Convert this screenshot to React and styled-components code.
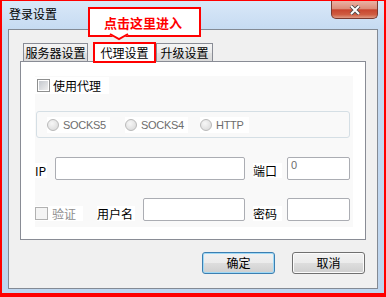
import styled, { createGlobalStyle } from "styled-components";

const GlobalStyle = createGlobalStyle`
  html, body {
    margin: 0;
    padding: 0;
    background: #fff;
  }
  body {
    font-family: "Noto Sans CJK SC", "Liberation Sans", sans-serif;
    font-size: 12px;
    color: #000;
  }
`;

const Shot = styled.div`
  position: relative;
  width: 386px;
  height: 297px;
  box-sizing: border-box;
  border: 2px solid #ff0000;
  border-top-width: 1px;
  border-bottom-width: 4px;
  display: flex;
`;

const Window = styled.div`
  flex: 1;
  display: flex;
  flex-direction: column;
  background: linear-gradient(#d9e8f8, #c6dbf2 28px, #bed5ee);
`;

const TitleBar = styled.div`
  height: 28px;
  display: flex;
  align-items: flex-start;
`;

const Title = styled.div`
  padding: 5px 0 0 7px;
  line-height: 16px;
  font-size: 12px;
`;

const CloseButton = styled.div`
  margin-left: auto;
  margin-right: 6px;
  width: 47px;
  height: 18px;
  box-sizing: border-box;
  border: 1px solid #7a3a30;
  border-top: none;
  border-radius: 0 0 5px 5px;
  background: linear-gradient(#eab2a4, #dc8d7a 45%, #c8452f 52%, #cf5d42 80%, #e09a84);
  display: flex;
  align-items: center;
  justify-content: center;
`;

const Panel = styled.div`
  flex: 1;
  margin: 0 6px 4px;
  background: #f0f0f0;
  border: 1px solid #838a94;
  padding: 13px 11px 0 11px;
  display: flex;
  flex-direction: column;
`;

const TabStrip = styled.div`
  display: flex;
  align-items: flex-end;
  height: 18px;
  padding-left: 3px;
  position: relative;
  z-index: 1;
`;

const Tab = styled.div`
  width: ${(p) => p.$w}px;
  height: ${(p) => (p.$active ? 21 : 18)}px;
  margin-left: ${(p) => p.$ml || 0}px;
  margin-bottom: ${(p) => (p.$active ? -2 : 0)}px;
  box-sizing: border-box;
  border: ${(p) => (p.$active ? "2px solid #ff0000" : "1px solid #898c95")};
  border-bottom: ${(p) => (p.$active ? "2px solid #ff0000" : "none")};
  background: ${(p) =>
    p.$active ? "#fff" : "linear-gradient(#f4f4f4, #ebebeb 50%, #e2e2e2 51%, #dadada)"};
  text-align: center;
  line-height: ${(p) => (p.$active ? 17 : 17)}px;
  font-size: 12px;
  white-space: nowrap;
`;

const Content = styled.div`
  width: 346px;
  height: 179px;
  box-sizing: border-box;
  background: #fff;
  border: 1px solid #898c95;
  padding: 14px 12px 12px 14px;
  display: flex;
`;

const FormArea = styled.div`
  flex: 1;
  background: #f9f9f9;
  display: flex;
  flex-direction: column;
`;

const CheckLabel = styled.div`
  width: 74px;
  height: 17px;
  margin-top: 1px;
  box-sizing: border-box;
  padding-left: 2px;
  background: #fff;
  display: flex;
  align-items: center;
  gap: 3px;
  line-height: 16px;
`;

const Checkbox = styled.span`
  width: 13px;
  height: 13px;
  box-sizing: border-box;
  border: 1px solid ${(p) => (p.$disabled ? "#b1b1b1" : "#8e8f8f")};
  padding: 1px;
  background: ${(p) =>
    p.$disabled
      ? "#f4f4f4"
      : "linear-gradient(135deg, #c4c8ce, #eeeeee) content-box, #fff"};
  flex: none;
`;

const RadioBox = styled.div`
  margin: 17px 0 0 1px;
  width: 314px;
  height: 27px;
  box-sizing: border-box;
  border: 1px solid #d5dfe5;
  border-radius: 3px;
  padding-left: 10px;
  display: flex;
  align-items: center;
`;

const RadioItem = styled.div`
  width: ${(p) => p.$w}px;
  margin-right: ${(p) => p.$mr || 0}px;
  height: 16px;
  background: #fff;
  display: flex;
  align-items: center;
  gap: 4px;
  font-family: "Liberation Sans", sans-serif;
  font-size: 11px;
  letter-spacing: -0.3px;
  color: #6d6d6d;
`;

const Radio = styled.span`
  width: 12px;
  height: 12px;
  box-sizing: border-box;
  border-radius: 50%;
  border: 1px solid #b9b9b9;
  background: radial-gradient(circle at 40% 35%, #f7f7f7, #d6d6d6);
  flex: none;
`;

const Row = styled.div`
  display: flex;
  align-items: flex-start;
  margin-top: ${(p) => p.$mt}px;
  height: 23px;
`;

const Label = styled.div`
  width: ${(p) => p.$w}px;
  margin: ${(p) => p.$mt || 0}px ${(p) => p.$mr || 0}px 0 ${(p) => p.$ml || 0}px;
  height: 15px;
  line-height: 15px;
  background: #fff;
  font-size: 12px;
  white-space: nowrap;
  color: ${(p) => (p.$muted ? "#8d8d8d" : "#000")};
  display: flex;
  align-items: center;
  gap: 4px;
`;

const Input = styled.div`
  width: ${(p) => p.$w}px;
  height: 23px;
  box-sizing: border-box;
  border: 1px solid #abadb3;
  border-radius: 2px;
  background: #fff;
  padding: 1px 3px;
  font-family: "Liberation Sans", sans-serif;
  font-size: 11px;
  line-height: 13px;
  color: #6d6d6d;
`;

const ButtonRow = styled.div`
  display: flex;
  justify-content: flex-end;
  gap: 17px;
  margin-top: 12px;
  padding-right: 1px;
`;

const Button = styled.div`
  width: 73px;
  height: 22px;
  box-sizing: border-box;
  border: 1px solid ${(p) => (p.$default ? "#3c7fb1" : "#707070")};
  border-radius: 3px;
  background: linear-gradient(#f2f2f2, #ebebeb 50%, #dddddd 51%, #cfcfcf);
  box-shadow: inset 0 0 0 1px ${(p) => (p.$default ? "#9fd9f6" : "#fbfbfb")};
  display: flex;
  align-items: center;
  justify-content: center;
  font-size: 12px;
  line-height: 16px;
`;

const Callout = styled.div`
  position: absolute;
  left: 86px;
  top: 6px;
  width: 113px;
  height: 30px;
  box-sizing: border-box;
  border: 2px solid #ff0000;
  background: #fff;
  color: #ff0000;
  font-weight: bold;
  font-size: 13px;
  display: flex;
  align-items: center;
  justify-content: center;
  padding-right: 3px;
  z-index: 5;
`;

const Notch = styled.svg`
  position: absolute;
  top: 100%;
  left: 20px;
  overflow: visible;
`;

const CloseIcon = () => (
  <svg width="12" height="10" viewBox="0 0 12 10">
    <path d="M2 1 L10 9 M10 1 L2 9" stroke="#4a4a4a" strokeWidth="3.8" />
    <path d="M2 1 L10 9 M10 1 L2 9" stroke="#fff" strokeWidth="2" />
  </svg>
);

export default function App() {
  return (
    <>
      <GlobalStyle />
      <Shot>
        <Window>
          <TitleBar>
            <Title>登录设置</Title>
            <CloseButton>
              <CloseIcon />
            </CloseButton>
          </TitleBar>
          <Panel>
            <TabStrip>
              <Tab $w={65}>服务器设置</Tab>
              <Tab $w={63} $ml={5} $active>
                代理设置
              </Tab>
              <Tab $w={57}>升级设置</Tab>
            </TabStrip>
            <Content>
              <FormArea>
                <CheckLabel>
                  <Checkbox />
                  使用代理
                </CheckLabel>
                <RadioBox>
                  <RadioItem $w={63} $mr={15}>
                    <Radio />
                    SOCKS5
                  </RadioItem>
                  <RadioItem $w={63} $mr={12}>
                    <Radio />
                    SOCKS4
                  </RadioItem>
                  <RadioItem $w={49}>
                    <Radio />
                    HTTP
                  </RadioItem>
                </RadioBox>
                <Row $mt={19}>
                  <Label $w={12} $mt={6} $mr={8}>
                    IP
                  </Label>
                  <Input $w={190} />
                  <Label $w={29} $mt={6} $ml={8} $mr={5}>
                    端口
                  </Label>
                  <Input $w={63}>0</Input>
                </Row>
                <Row $mt={18}>
                  <Label $w={48} $mt={8} $muted>
                    <Checkbox $disabled />
                    验证
                  </Label>
                  <Label $w={38} $mt={8} $ml={14} $mr={8}>
                    用户名
                  </Label>
                  <Input $w={102} />
                  <Label $w={29} $mt={8} $ml={8} $mr={5}>
                    密码
                  </Label>
                  <Input $w={63} />
                </Row>
              </FormArea>
            </Content>
            <ButtonRow>
              <Button $default>确定</Button>
              <Button>取消</Button>
            </ButtonRow>
          </Panel>
        </Window>
        <Callout>
          点击这里进入
          <Notch width="18" height="6">
            <polygon points="0,-2 18,-2 18,0 9,5 0,0" fill="#fff" />
            <polyline points="0,-1 9,4 18,-1" fill="none" stroke="#ff0000" strokeWidth="2" />
          </Notch>
        </Callout>
      </Shot>
    </>
  );
}
